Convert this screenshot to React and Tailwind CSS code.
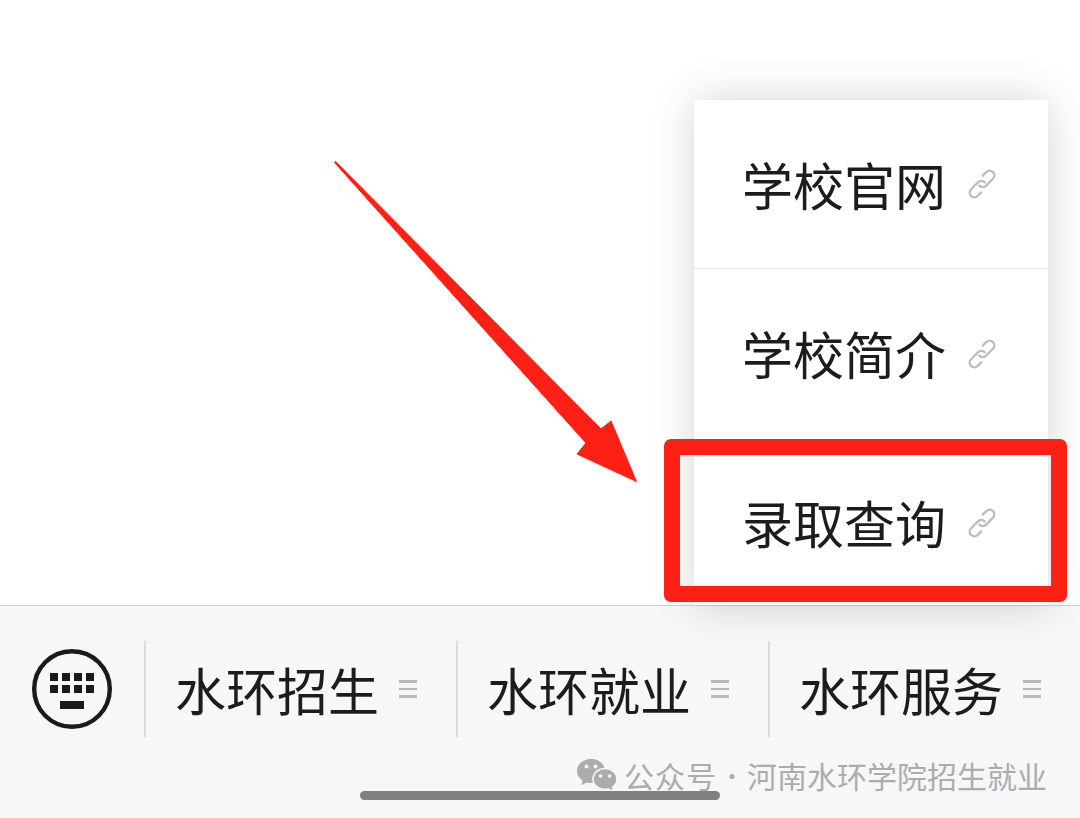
import React from "react";

const FONT = "font-['Noto_Sans_CJK_SC','Noto_Sans',sans-serif]";

function LinkIcon() {
  return (
    <svg width="32" height="32" viewBox="0 0 30 30" fill="none" stroke="#bdbdbd" strokeWidth="2.2" strokeLinecap="round" strokeLinejoin="round" className="shrink-0">
      <path d="M12.5 16.5 C14.5 18.5 17 18.3 18.6 16.7 L25.2 10.1 C27 8.2 27 5.6 25.3 3.9 C23.5 2.1 20.9 2.1 19 3.9 L15.8 7.1" />
      <path d="M17.5 13.5 C15.5 11.5 13 11.7 11.4 13.3 L4.8 19.9 C3 21.8 3 24.4 4.7 26.1 C6.5 27.9 9.1 27.9 11 26.1 L14.2 22.9" />
    </svg>
  );
}

function MenuGlyph() {
  return (
    <div className="flex w-[18px] shrink-0 flex-col gap-[5px]">
      <div className="h-[2.5px] bg-[#b8b8b8]" />
      <div className="h-[2.5px] bg-[#b8b8b8]" />
      <div className="h-[2.5px] bg-[#b8b8b8]" />
    </div>
  );
}

function KeyboardIcon() {
  const xs = [18, 30, 42, 54];
  const ys = [13, 25];
  return (
    <svg width="80" height="80" viewBox="0 0 80 80" className="shrink-0">
      <circle cx="40" cy="40" r="37.8" fill="none" stroke="#1a1a1a" strokeWidth="4.4" />
      {ys.map((y) =>
        xs.map((x) => <rect key={`${x}-${y}`} x={x} y={y + 11} width="8" height="8" fill="#1a1a1a" />)
      )}
      <rect x="28" y="52" width="24" height="8" fill="#1a1a1a" />
    </svg>
  );
}

function WeChatIcon() {
  return (
    <svg width="42" height="36" viewBox="0 0 42 36" className="shrink-0">
      <path d="M15 1 C22.7 1 29 6.200 29 13 C29 19.800 22.700 25 15 25 C13.500 25 12.100 24.800 10.800 24.400 L5.500 27.300 L6.400 22.300 C3 20.100 1 16.800 1 13 C1 6.200 7.300 1 15 1 Z" fill="#acacac" />
      <path d="M29 10.500 C35.700 10.500 41 15.100 41 21 C41 24.300 39.400 27.100 36.700 29.100 L37.400 33.500 L32.700 31 C31.500 31.300 30.300 31.500 29 31.500 C22.300 31.500 17 26.900 17 21 C17 15.100 22.300 10.500 29 10.500 Z" fill="#acacac" stroke="#f7f7f7" strokeWidth="1.600" />
      <circle cx="10.500" cy="8.500" r="2" fill="#f7f7f7" />
      <circle cx="19.500" cy="8.500" r="2" fill="#f7f7f7" />
      <circle cx="24.500" cy="18" r="1.800" fill="#f7f7f7" />
      <circle cx="33.500" cy="18" r="1.800" fill="#f7f7f7" />
    </svg>
  );
}

function MenuRow({ label, className }) {
  return (
    <div className={`flex items-center pl-[48px] ${className}`}>
      <span className="w-[204px] text-[51px] leading-none whitespace-nowrap text-[#1c1c1c]">{label}</span>
      <span className="ml-[20px] flex"><LinkIcon /></span>
    </div>
  );
}

function Tab({ label }) {
  return (
    <div className="flex h-[96px] w-[312px] shrink-0 items-center border-l-2 border-[#dcdcdc] pl-[29px]">
      <span className="w-[204px] text-[51px] leading-none whitespace-nowrap text-[#1c1c1c]">{label}</span>
      <span className="ml-[20px]"><MenuGlyph /></span>
    </div>
  );
}

export default function App() {
  return (
    <div className={`relative flex h-[818px] w-[1080px] flex-col overflow-hidden bg-white ${FONT}`}>
      <div className="h-[605px] shrink-0 bg-white" />

      <div className="flex flex-1 flex-col border-t border-[#cfcfcf] bg-[#f7f7f7]">
        <div className="mt-[35px] flex items-center">
          <div className="flex w-[144px] shrink-0 justify-center">
            <KeyboardIcon />
          </div>
          <Tab label="水环招生" />
          <Tab label="水环就业" />
          <Tab label="水环服务" />
        </div>
        <div className="mt-[18px] flex items-center justify-end pr-[33px] text-[30px] leading-none whitespace-nowrap text-[#acacac]">
          <span className="mt-[3px] mr-[6px] flex"><WeChatIcon /></span>
          <span className="tracking-[1px]">公众号</span>
          <span className="w-[30px] text-center text-[24px]">·</span>
          <span>河南水环学院招生就业</span>
        </div>
      </div>

      {/* home indicator */}
      <div className="absolute top-[791px] left-[360px] h-[9px] w-[360px] rounded-full bg-[#808080]" />

      {/* popup menu */}
      <div className="absolute top-[100px] left-[694px] w-[354px] bg-white shadow-[0_0_40px_rgba(0,0,0,0.17)]">
        <MenuRow label="学校官网" className="h-[169px] border-b border-[#e5e5e5]" />
        <MenuRow label="学校简介" className="h-[169px]" />
        <MenuRow label="录取查询" className="h-[167px] pt-[2px]" />
      </div>

      {/* annotation: red box */}
      <div className="absolute top-[439px] left-[664px] h-[163px] w-[403px] rounded-[7px] border-[16px] border-[#ff2015]" />

      {/* annotation: red arrow */}
      <svg className="absolute top-0 left-0" width="1080" height="818" viewBox="0 0 1080 818" fill="none">
        <path d="M334.500 162.500 L335.500 161.500 L601 429 L611 421 L636.500 481.500 L577 454 L586 443 Z" fill="#ff2015" stroke="#ff2015" strokeWidth="1" strokeLinejoin="round" />
      </svg>
    </div>
  );
}
